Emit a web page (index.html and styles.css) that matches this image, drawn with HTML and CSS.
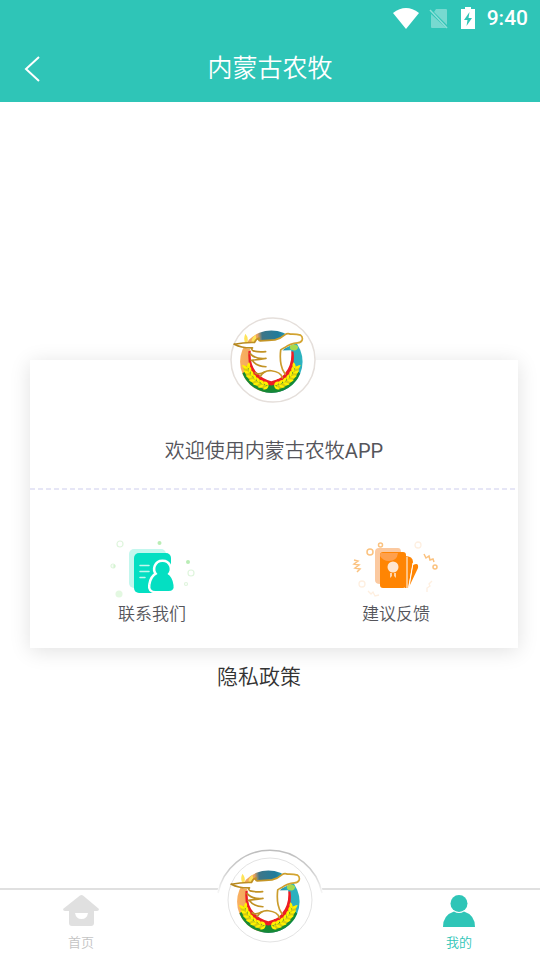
FILE: index.html
```html
<!DOCTYPE html>
<html lang="zh-CN">
<head>
<meta charset="utf-8">
<meta name="viewport" content="width=device-width, initial-scale=1">
<title>内蒙古农牧</title>
<link rel="stylesheet" href="styles.css">
</head>
<body>
<svg class="defs" aria-hidden="true">
  <defs>
    <linearGradient id="disc" gradientUnits="userSpaceOnUse" x1="34" x2="216" y1="100" y2="85">
      <stop offset="0" stop-color="#f9b060"/><stop offset=".3" stop-color="#eda25c"/>
      <stop offset=".38" stop-color="#3f7688"/><stop offset=".65" stop-color="#1f7c9c"/>
      <stop offset=".82" stop-color="#2caebd"/><stop offset="1" stop-color="#2cb2bf"/>
    </linearGradient>
    <linearGradient id="gold" gradientUnits="userSpaceOnUse" x1="15" x2="216" y1="0" y2="0">
      <stop offset="0" stop-color="#b5861c"/><stop offset="1" stop-color="#d5a632"/>
    </linearGradient>
    <g id="grain">
      <path d="M126 179q-13 1-17-10 14-4 17 10zM126 179q-12 2-15 13 13 1 15-13z" fill="#fff200"/>
    </g>
    <symbol id="emblem" viewBox="2 -26 256 256">
      <circle cx="125" cy="107" r="93" fill="url(#disc)"/>
      <path d="M39 142a93 93 0 0 0 172 0l-27-24H66z" fill="#168a35"/>
      <path d="M47 120A80 80 0 0 0 108 183M203 120A80 80 0 0 1 142 183" fill="none" stroke="#d8cc10" stroke-width="13"/>
      <path d="M57 75q-4 50 19 78q19 21 49 25q30-4 49-25q23-30 17-76z" fill="#ed1c24"/>
      <path d="M64 75q-4 43 19 66q18 20 42 24q24-4 41-24q22-27 18-68z" fill="#fff"/>
      <g>
        <use href="#grain" transform="rotate(7 125 105)"/>
        <use href="#grain" transform="rotate(18 125 105)"/>
        <use href="#grain" transform="rotate(29 125 105)"/>
        <use href="#grain" transform="rotate(40 125 105)"/>
        <use href="#grain" transform="rotate(51 125 105)"/>
        <use href="#grain" transform="rotate(62 125 105)"/>
        <use href="#grain" transform="rotate(73 125 105)"/>
      </g>
      <g transform="matrix(-1 0 0 1 250 0)">
        <use href="#grain" transform="rotate(7 125 105)"/>
        <use href="#grain" transform="rotate(18 125 105)"/>
        <use href="#grain" transform="rotate(29 125 105)"/>
        <use href="#grain" transform="rotate(40 125 105)"/>
        <use href="#grain" transform="rotate(51 125 105)"/>
        <use href="#grain" transform="rotate(62 125 105)"/>
        <use href="#grain" transform="rotate(73 125 105)"/>
      </g>
      <path d="M47 51q-6-14 1-27 10 12 6 26zM66 48q0-12 12-21 4 11-1 21z" fill="#ffe45a"/>
      <path d="M180 62q8-12 20-4 8 4 2 12-7 7-13 2-8 3-9-10z" fill="#a5da50"/>
      <path d="M15 55q30-6 60-5q4-11 14-13q-4 7 3 8q26-2 44-3q17-4 29-15q8-6 17-2q17-1 30 3q7 5 5 14q-3 8-14 9q-22 7-38 17q-11 7-13 27q1 33 12 48q-9 18-39 18q-28-3-44-26l8-9q-16-9-22-29l12-4q-13-6-17-23q-20-2-35-23z" fill="#fff"/>
      <g fill="none" stroke="url(#gold)" stroke-width="5" stroke-linecap="round" stroke-linejoin="round">
        <path d="M15 55q30-6 60-5q4-11 14-13q-4 7 3 8q26-2 44-3q17-4 29-15q8-6 17-2q17-1 30 3q7 5 5 14q-3 8-14 9q-22 2-38 14-7 3-12 7-3 23 1 44 3 16 12 28"/>
        <path d="M15 55q22 12 54 11-5 4 2 9 15 4 37 2M62 83q14 17 47 14M65 103q18-2 44-6M68 103q12 18 41 19M77 140q10 8 28-2"/>
        <path d="M92 151q12-19 33-17 28 3 33 21"/>
      </g>
    </symbol>
  </defs>
</svg>

<header class="top">
  <div class="status">
    <svg class="wifi" viewBox="0 0 26 21" aria-hidden="true"><path d="M13 21L0 5Q13-5 26 5z" fill="#fff"/></svg>
    <svg class="sim" viewBox="0 0 20 21" aria-hidden="true"><path d="M7 1h10q1 0 1 1v15L5 4zM2 6l15 14H3q-1 0-1-1z" fill="#fff" opacity=".35"/><path d="M1 2l17 18" stroke="#fff" stroke-width="1.500" opacity=".45"/></svg>
    <svg class="battery" viewBox="0 0 14 22" aria-hidden="true"><path d="M4 0h6v2h4v20H0V2h4z" fill="#fff"/><path d="M8.500 5L3 13h3.500L5.500 19 11 11H7.500z" fill="#2fc5b7"/></svg>
    <time>9:40</time>
  </div>
  <div class="nav">
    <button class="back" type="button" aria-label="返回"><svg viewBox="0 0 16 26" aria-hidden="true"><path d="M15 1L2 13l13 12" fill="none" stroke="#fff" stroke-width="2"/></svg></button>
    <h1>内蒙古农牧</h1>
  </div>
</header>

<main>
  <section class="card">
    <svg class="avatar" viewBox="0 0 86 86" aria-hidden="true"><circle cx="43" cy="43" r="42" fill="#fff" stroke="#e5dfdb" stroke-width="1.500"/><use href="#emblem" width="86" height="86"/></svg>
    <p class="welcome">欢迎使用内蒙古农牧<span>APP</span></p>
    <div class="actions">
      <button type="button">
        <svg viewBox="0 0 88 60" aria-hidden="true">
          <g fill="none" stroke="#dff5dd" stroke-width="1.200"><circle cx="12" cy="4" r="3"/><circle cx="83" cy="33" r="3"/><circle cx="5" cy="26" r="2"/><circle cx="78" cy="44" r="1.500"/></g>
          <g fill="#b9edb5"><circle cx="51.500" cy="3" r="2"/><circle cx="80" cy="22" r="2"/><circle cx="11" cy="54" r="3.500" opacity=".4"/><circle cx="6" cy="26" r="1.500" opacity=".4"/></g>
          <rect x="21" y="9" width="37" height="39" rx="5" fill="#c3f7ee"/>
          <rect x="26" y="13" width="37" height="40" rx="5" fill="#04dfc2"/>
          <path d="M32 25.500h9M32 31.500h9M32 37.500h5" stroke="#c3f7ee" stroke-width="1.500" stroke-linecap="round"/>
          <path d="M54.500 22a7 7 0 0 0-5 12q-6 3-7 11q-1 6 5 6h13q6 0 5-6q-1-8-6-11a7 7 0 0 0-5-12z" fill="#04dfc2" stroke="#fff" stroke-width="5"/>
          <path d="M54.500 22a7 7 0 0 0-5 12q-6 3-7 11q-1 6 5 6h13q6 0 5-6q-1-8-6-11a7 7 0 0 0-5-12z" fill="#04dfc2"/>
        </svg>
        <span>联系我们</span>
      </button>
      <button type="button">
        <svg viewBox="0 0 88 60" aria-hidden="true">
          <g fill="none" stroke="#fbc27f" stroke-width="1.500"><circle cx="18" cy="12" r="3"/><circle cx="28.500" cy="5" r="2"/><circle cx="83" cy="27" r="2"/><path d="M2 20l4 1-4 3 5 1-4 3 5 1-3 3M72 14l2 4 3-2 1 4 3-1 1 3"/></g>
          <g fill="none" stroke="#feefe0" stroke-width="1.300"><circle cx="10" cy="44" r="3"/><circle cx="66" cy="5" r="3"/><path d="M16 51l3 3 2-2 2 4 4-1M80 41l-3 3 1 2-3 2v4"/></g>
          <path d="M61 25q6-3 5 3l-9 19z" fill="#ff8503"/>
          <path d="M53 16q8 0 8 6l-5 26h-3z" fill="#ff8503"/>
          <path d="M55 17v31M61 23l-4 24" stroke="#fff"/>
          <path d="M27 8h19q3 0 3 4v32H28q-5 0-5-4V12q0-4 4-4z" fill="#fbc9a0"/>
          <rect x="28" y="12" width="26" height="36" rx="3" fill="#ff8503"/>
          <path d="M29 13h17q-1 8-9 8-6 0-9-5 0-3 1-3z" fill="#ffa04c"/>
          <circle cx="41" cy="27" r="5.500" fill="#ffe6cf"/><path d="M38 33v5l2-2v-3zM42 33v3l2 2v-5z" fill="#ffd3a8"/>
        </svg>
        <span>建议反馈</span>
      </button>
    </div>
  </section>
  <a class="privacy" href="#privacy">隐私政策</a>
</main>

<nav class="tabs">
  <a href="#home">
    <svg viewBox="0 0 36 32" aria-hidden="true"><path d="M17 .5q1.500-1 3 0L36 14q0 2-2 2h-3v12q0 3-3 3H9q-3 0-3-3V16H2q-2 0-2-2z" fill="#e0e0e0"/><path d="M12 18h13q-1 6-6.500 6T12 18z" fill="#fff"/></svg>
    <span>首页</span>
  </a>
  <a class="center" href="#main" aria-label="内蒙古农牧">
    <svg viewBox="0 0 108 102" aria-hidden="true">
      <defs>
        <linearGradient id="rim" x1="0" x2="0" y1="0" y2="1">
          <stop offset="0" stop-color="#bdbdbd"/><stop offset=".5" stop-color="#d0d0d0"/><stop offset="1" stop-color="#f6f6f6"/>
        </linearGradient>
      </defs>
      <circle cx="54" cy="54" r="54" fill="#fff"/>
      <path d="M2 44a53 53 0 0 1 104 0" fill="none" stroke="url(#rim)" stroke-width="1.500"/>
      <circle cx="54" cy="51" r="42" fill="#fff" stroke="#e3e3e3"/>
      <use href="#emblem" x="11" y="8" width="86" height="86"/>
    </svg>
  </a>
  <a class="active" href="#mine">
    <svg viewBox="0 0 36 32" aria-hidden="true"><circle cx="18" cy="8.500" r="8.500" fill="#2fc5b7"/><path d="M2 32q0-12 11-15.500 5 3 10 0Q34 20 34 32z" fill="#2fc5b7"/></svg>
    <span>我的</span>
  </a>
</nav>
</body>
</html>
```
FILE: styles.css
```css
* { box-sizing: border-box; }

body {
  margin: 0;
  min-height: 100vh;
  display: flex;
  flex-direction: column;
  background: #fff;
  color: #55555b;
  font-family: Roboto, "Noto Sans CJK SC", sans-serif;
  font-weight: 350;
}

button {
  border: 0;
  padding: 0;
  background: none;
  color: inherit;
  font: inherit;
  cursor: pointer;
}

a { color: inherit; text-decoration: none; }
svg { display: block; }
.defs { position: absolute; width: 0; height: 0; }

.top { background: #2fc5b7; color: #fff; }

.status {
  display: flex;
  align-items: center;
  justify-content: flex-end;
  height: 36px;
  padding-right: 12px;
}
.wifi { width: 26px; height: 21px; margin-right: 10px; }
.sim { width: 20px; height: 21px; margin-right: 12px; }
.battery { width: 14px; height: 22px; margin-right: 12px; }
.status time { font-size: 21px; font-weight: 500; }

.nav {
  display: grid;
  grid-template-columns: 64px 1fr 64px;
  align-items: center;
  height: 66px;
}
.back { display: grid; place-items: center; height: 48px; }
.back svg { width: 16px; height: 26px; }
.nav h1 {
  margin: 0;
  font-size: 25px;
  line-height: 32px;
  font-weight: 350;
  text-align: center;
}

main {
  flex: 1;
  padding: 258px 22px 24px 30px;
}

.card {
  background: #fff;
  box-shadow: 0 3px 20px rgba(0, 0, 0, 0.12);
}
.avatar { width: 86px; height: 86px; margin: 0 auto; transform: translate(-1px, -50%); }
.welcome {
  margin: 0;
  padding-bottom: 22px;
  margin-top: -10px;
  font-size: 20px;
  line-height: 30px;
  text-align: center;
}
.welcome span { font-weight: 400; }
.actions {
  display: grid;
  grid-template-columns: 1fr 1fr;
  padding: 52px 0 22px;
  background: repeating-linear-gradient(90deg, #e6e6f6 0 5px, transparent 5px 8px) top / 100% 2px no-repeat;
}
.actions button {
  display: flex;
  flex-direction: column;
  align-items: center;
  gap: 2px;
  font-size: 17px;
  line-height: 24px;
}
.actions svg { width: 88px; height: 60px; }

.privacy {
  display: block;
  width: fit-content;
  margin: 12px auto 0;
  padding-right: 30px;
  color: #333;
  font-size: 21px;
  line-height: 34px;
}

.tabs {
  display: grid;
  grid-template-columns: 3fr 4fr 3fr;
  border-top: 2px solid #e0e0e0;
  height: 72px;
  color: #c4c4c4;
  font-size: 13px;
  line-height: 20px;
}
.tabs a {
  display: flex;
  flex-direction: column;
  align-items: center;
  gap: 6px;
  padding-top: 5px;
}
.tabs a svg { width: 36px; height: 32px; }
.tabs .active { color: #2fc5b7; }
.tabs .center { position: relative; }
.tabs .center svg {
  position: absolute;
  bottom: 9px;
  width: 108px;
  height: 102px;
}
```
